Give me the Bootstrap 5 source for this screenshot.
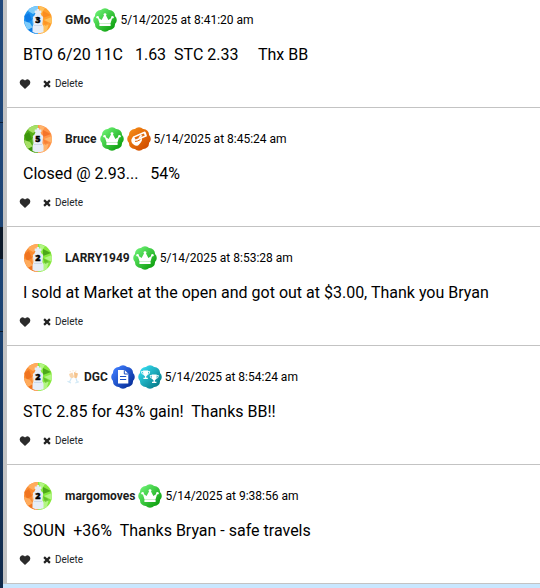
<!DOCTYPE html>
<html lang="en">
<head>
<meta charset="utf-8">
<meta name="viewport" content="width=device-width, initial-scale=1">
<title>Comments</title>
<link href="https://cdn.jsdelivr.net/npm/bootstrap@5.3.0/dist/css/bootstrap.min.css" rel="stylesheet">
<script src="https://cdn.jsdelivr.net/npm/bootstrap@5.3.0/dist/js/bootstrap.bundle.min.js" defer></script>
<style>
body { font-family: Roboto, "Liberation Sans", sans-serif; color: #000; }
.edge {
  width: 3px;
  background: linear-gradient(#0000 122px, #0c1e36 122px 123px, #0000 123px 227px, #0b1828 227px 259px, #0000 259px 331px, #0b1828 331px 332px, #0000 332px),
              linear-gradient(#21497c, #1b4373 55%, #10294a);
}
.feed { border-left: 4px solid #c3c3c3; background: #fff; }
.post { padding: 17px 16px 15px; border-bottom: 1px solid #c3c3c3; }
.post:first-child { padding-top: 6px; }
.head { gap: 3px; font-size: 12px; line-height: 28px; padding-left: 1px; }
.avatar { width: 28px; height: 28px; margin-right: 10px; }
.avatar text { font: 800 9px "Open Sans", sans-serif; text-anchor: middle; stroke: #000; stroke-width: .4px; }
.award { width: 24px; height: 24px; }
.cheers { width: 16px; height: 16px; }
.name { font-weight: 700; color: #1c1c1c; }
.msg { font-size: 16px; line-height: 24px; margin: 9px 0; white-space: pre-wrap; }
.acts { gap: 12px; height: 16px; margin-left: -4px; }
.acts button { font-size: 10px; line-height: 16px; color: #212529; gap: 4px; }
.acts .heart { width: 12px; height: 12px; }
.acts .cross { width: 8px; height: 8px; }
.next { background: #c9e7ff; }
.cool-warm { --a: #1e94f0; --b: #0c7be6; --c: #7fccfa; --d: #ffa02c; --e: #ffc15c; --f: #fb8c1e; }
.green-warm { --a: #55ad18; --b: #3c960c; --c: #a6e066; --d: #ff9448; --e: #ffb36b; --f: #f4742a; }
.warm-green { --a: #fa8c32; --b: #f07420; --c: #ffab5c; --d: #86e83c; --e: #b2f584; --f: #4ca81a; }
</style>
</head>
<body>
<svg class="position-absolute" width="0" height="0" aria-hidden="true">
  <defs>
    <linearGradient id="gGreen" x1="0" y1="0" x2="1" y2="1"><stop offset=".1" stop-color="#6cf274"/><stop offset=".9" stop-color="#0a9c0a"/></linearGradient>
    <linearGradient id="gOrange" x1="0" y1="0" x2="1" y2="1"><stop offset=".1" stop-color="#f58a14"/><stop offset=".9" stop-color="#cf4a00"/></linearGradient>
    <linearGradient id="gBlue" x1="0" y1="0" x2="1" y2="1"><stop offset=".1" stop-color="#3f7dff"/><stop offset=".9" stop-color="#052c96"/></linearGradient>
    <linearGradient id="gTeal" x1="0" y1="0" x2="1" y2="1"><stop offset=".1" stop-color="#35dcf0"/><stop offset=".9" stop-color="#047886"/></linearGradient>
    <clipPath id="disc"><circle cx="14" cy="14" r="14"/></clipPath>
  </defs>
  <symbol id="seal" viewBox="0 0 24 24"><path d="M7.9 2A5.6 5.6 0 0 1 16.1 2A5.6 5.6 0 0 1 22 7.9A5.6 5.6 0 0 1 22 16.1A5.6 5.6 0 0 1 16.1 22A5.6 5.6 0 0 1 7.9 22A5.6 5.6 0 0 1 2 16.1A5.6 5.6 0 0 1 2 7.9A5.6 5.6 0 0 1 7.9 2Z"/></symbol>
  <symbol id="crown" viewBox="0 0 24 24">
    <use href="#seal" fill="url(#gGreen)"/>
    <path d="M6.6 15.8 4.6 9.2 8.6 12 11.4 6.8H12.6L15.4 12 19.4 9.2 17.4 15.8Z" fill="#fff"/><rect x="6.4" y="16" width="11.2" height="2" fill="#fff"/>
    <circle cx="12" cy="6.6" r="1.4" fill="#fff"/><circle cx="4.6" cy="9.2" r="1.3" fill="#fff"/><circle cx="19.4" cy="9.2" r="1.3" fill="#fff"/>
  </symbol>
  <symbol id="hand" viewBox="0 0 24 24">
    <use href="#seal" fill="url(#gOrange)"/>
    <path d="M6 9.4 17.4 4.6Q18.4 4.6 19 6L20 9.2 14.8 11.6Q15.6 13.4 13.8 15.6L11.4 18.2Q9 19.6 6.6 17.4 3.8 15.6 4.4 12.4Z" fill="#fff"/>
    <path d="M7.4 10.6 16.8 6.4 17.8 8.6 8.6 12.6Z" fill="#e26a0c"/><path d="M11.4 10.8 13.8 7.7 15.4 8.8 13 11Z" fill="#fff"/><path d="M8 14.4Q9.8 14.8 13.4 12.6" fill="none" stroke="#df6308" stroke-width="1"/>
  </symbol>
  <symbol id="doc" viewBox="0 0 24 24">
    <use href="#seal" fill="url(#gBlue)"/>
    <path d="M7 5H13.5L17.3 8.8V18.6H7Z" fill="#fff"/><path d="M13.3 5.2V9H17" fill="none" stroke="#1b4fc4"/>
    <path d="M9 11.5H15.2M9 14.5H15.2" stroke="#1b4fc4" stroke-width="1.2"/>
  </symbol>
  <symbol id="cup" viewBox="0 0 10 10">
    <path d="M2.4.5H7.6V3Q7.6 6 5.7 6.4V8H7.3V9.4H2.7V8H4.3V6.4Q2.4 6 2.4 3Z" fill="#fff"/><path d="M2.6 1.6H.6Q.6 4.4 3 4.6M7.4 1.6H9.4Q9.4 4.4 7 4.6" fill="none" stroke="#fff" stroke-width=".9"/>
  </symbol>
  <symbol id="cups" viewBox="0 0 24 24">
    <use href="#seal" fill="url(#gTeal)"/><use href="#cup" x="2.8" y="5" width="9.6" height="9.6"/><use href="#cup" x="11.4" y="9" width="9.6" height="9.6"/>
  </symbol>
  <symbol id="face" viewBox="0 0 28 28">
    <g clip-path="url(#disc)">
      <path d="M0 0H14V28H0Z" fill="var(--a)"/><path d="M14 0H28V28H14Z" fill="var(--d)"/>
      <path d="M7 0H14V5L9 8 4 5Z" fill="var(--c)"/><path d="M0 10 5 7 8 14 3 17Z" fill="var(--b)"/><path d="M0 15 6 17 9 22 3 24Z" fill="var(--c)"/><path d="M8 14 11 10V18L9 20Z" fill="#fff" opacity=".3"/><path d="M4 24 9 21 11 28Z" fill="var(--b)"/>
      <path d="M15 0 21 2 17 8Z" fill="var(--e)"/><path d="M19 5 27 9 19 12Z" fill="var(--f)"/><path d="M28 11 20 14 28 18Z" fill="var(--e)"/><path d="M18 20 25 17 22 28H18Z" fill="var(--e)"/><path d="M19 14 26 18 21 20Z" fill="var(--f)" opacity=".6"/>
    </g>
    <path d="M12.8 3H15.2V4.5H17.3V7H16.5L17.5 9.5 19.2 11 18.4 18 19.5 21V26Q14 28.6 8.5 26V21L9.6 18 8.8 11 10.5 9.5 11.5 7H10.7V4.5H12.8Z" fill="#e6edf7"/>
    <path d="M10 19.5H18" stroke="#c4d1e4" stroke-width=".8"/>
  </symbol>
  <symbol id="heart" viewBox="0 0 12 12"><path d="M6 11 1.3 6.6Q.2 4.8 1 3 2.6.6 5 1.7L6 2.6 7 1.7Q9.4.6 11 3 11.8 4.8 10.7 6.6Z" fill="#2b2b2b"/></symbol>
  <symbol id="cross" viewBox="0 0 8 8"><path d="M1.1 1.1 6.9 6.9M6.9 1.1 1.1 6.9" stroke="#222" stroke-width="2.2"/></symbol>
  <symbol id="glasses" viewBox="0 0 16 16">
    <path d="M4 5 7.5 3.5 9 7.5Q8.5 9.5 6.5 9.2 4.5 8.5 4 5Z" fill="#f8d5ad"/><path d="M9 3 13 4.5 12 8.5Q10.5 10 9.3 8.6Z" fill="#f5c48d"/>
    <path d="M6.4 9 4.5 13M2.5 12.3 6 14M11 9.3 12.3 13.3M10.3 14 14 12.8" stroke="#cfe8f6" stroke-width="1.2"/><path d="M5 2 5.6 3.2M8 1V2.4M11 1.5 10.6 3" stroke="#fae8d0"/>
  </symbol>
</svg>

<div class="d-flex min-vh-100">
  <div class="edge flex-shrink-0"></div>
  <div class="d-flex flex-column flex-grow-1">
    <main class="feed">
      <article class="post">
        <header class="head d-flex align-items-center">
          <svg class="avatar cool-warm" viewBox="0 0 28 28"><use href="#face"/><text x="14" y="17">3</text></svg>
          <span class="name">GMo</span>
          <svg class="award"><use href="#crown"/></svg>
          <time>5/14/2025 at 8:41:20 am</time>
        </header>
        <p class="msg">BTO 6/20 11C   1.63  STC 2.33     Thx BB</p>
        <div class="acts d-flex align-items-center">
          <button type="button" class="btn p-0 border-0 d-flex" aria-label="Like"><svg class="heart"><use href="#heart"/></svg></button>
          <button type="button" class="btn p-0 border-0 d-flex align-items-center"><svg class="cross"><use href="#cross"/></svg>Delete</button>
        </div>
      </article>
      <article class="post">
        <header class="head d-flex align-items-center">
          <svg class="avatar green-warm" viewBox="0 0 28 28"><use href="#face"/><text x="14" y="17">5</text></svg>
          <span class="name">Bruce</span>
          <svg class="award"><use href="#crown"/></svg>
          <svg class="award"><use href="#hand"/></svg>
          <time>5/14/2025 at 8:45:24 am</time>
        </header>
        <p class="msg">Closed @ 2.93...   54%</p>
        <div class="acts d-flex align-items-center">
          <button type="button" class="btn p-0 border-0 d-flex" aria-label="Like"><svg class="heart"><use href="#heart"/></svg></button>
          <button type="button" class="btn p-0 border-0 d-flex align-items-center"><svg class="cross"><use href="#cross"/></svg>Delete</button>
        </div>
      </article>
      <article class="post">
        <header class="head d-flex align-items-center">
          <svg class="avatar warm-green" viewBox="0 0 28 28"><use href="#face"/><text x="14" y="17">2</text></svg>
          <span class="name">LARRY1949</span>
          <svg class="award"><use href="#crown"/></svg>
          <time>5/14/2025 at 8:53:28 am</time>
        </header>
        <p class="msg">I sold at Market at the open and got out at $3.00, Thank you Bryan</p>
        <div class="acts d-flex align-items-center">
          <button type="button" class="btn p-0 border-0 d-flex" aria-label="Like"><svg class="heart"><use href="#heart"/></svg></button>
          <button type="button" class="btn p-0 border-0 d-flex align-items-center"><svg class="cross"><use href="#cross"/></svg>Delete</button>
        </div>
      </article>
      <article class="post">
        <header class="head d-flex align-items-center">
          <svg class="avatar warm-green" viewBox="0 0 28 28"><use href="#face"/><text x="14" y="17">2</text></svg>
          <svg class="cheers"><use href="#glasses"/></svg>
          <span class="name">DGC</span>
          <svg class="award"><use href="#doc"/></svg>
          <svg class="award"><use href="#cups"/></svg>
          <time>5/14/2025 at 8:54:24 am</time>
        </header>
        <p class="msg">STC 2.85 for 43% gain!  Thanks BB!!</p>
        <div class="acts d-flex align-items-center">
          <button type="button" class="btn p-0 border-0 d-flex" aria-label="Like"><svg class="heart"><use href="#heart"/></svg></button>
          <button type="button" class="btn p-0 border-0 d-flex align-items-center"><svg class="cross"><use href="#cross"/></svg>Delete</button>
        </div>
      </article>
      <article class="post">
        <header class="head d-flex align-items-center">
          <svg class="avatar warm-green" viewBox="0 0 28 28"><use href="#face"/><text x="14" y="17">2</text></svg>
          <span class="name">margomoves</span>
          <svg class="award"><use href="#crown"/></svg>
          <time>5/14/2025 at 9:38:56 am</time>
        </header>
        <p class="msg">SOUN  +36%  Thanks Bryan - safe travels</p>
        <div class="acts d-flex align-items-center">
          <button type="button" class="btn p-0 border-0 d-flex" aria-label="Like"><svg class="heart"><use href="#heart"/></svg></button>
          <button type="button" class="btn p-0 border-0 d-flex align-items-center"><svg class="cross"><use href="#cross"/></svg>Delete</button>
        </div>
      </article>
    </main>
    <div class="next flex-grow-1"></div>
  </div>
</div>
</body>
</html>
